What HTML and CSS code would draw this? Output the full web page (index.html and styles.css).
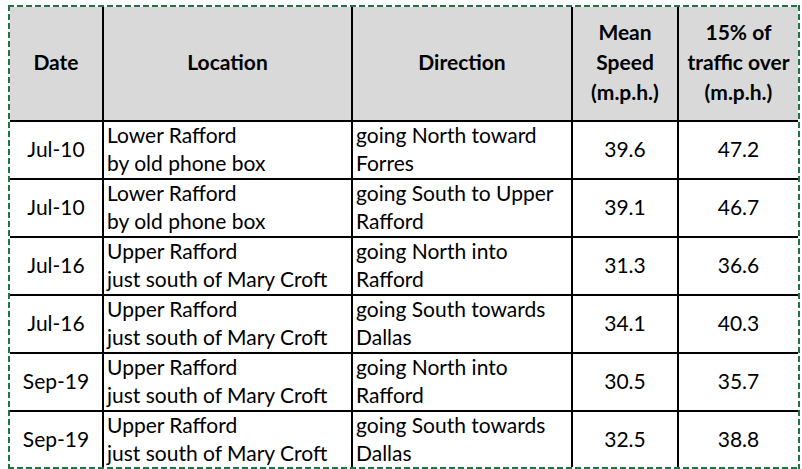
FILE: index.html
```html
<!DOCTYPE html>
<html lang="en">
<head>
<meta charset="utf-8">
<title>Traffic speeds</title>
<link rel="stylesheet" href="styles.css">
</head>
<body>
<div class="sheet">
  <div class="grid">
    <div class="cell head">Date</div>
    <div class="cell head">Location</div>
    <div class="cell head">Direction</div>
    <div class="cell head">Mean<br>Speed<br>(m.p.h.)</div>
    <div class="cell head">15% of<br>traffic over<br>(m.p.h.)</div>

    <div class="cell num">Jul-10</div>
    <div class="cell txt">Lower Rafford<br>by old phone box</div>
    <div class="cell txt">going North toward<br>Forres</div>
    <div class="cell num">39.6</div>
    <div class="cell num">47.2</div>

    <div class="cell num">Jul-10</div>
    <div class="cell txt">Lower Rafford<br>by old phone box</div>
    <div class="cell txt">going South to Upper<br>Rafford</div>
    <div class="cell num">39.1</div>
    <div class="cell num">46.7</div>

    <div class="cell num">Jul-16</div>
    <div class="cell txt">Upper Rafford<br>just south of Mary Croft</div>
    <div class="cell txt">going North into<br>Rafford</div>
    <div class="cell num">31.3</div>
    <div class="cell num">36.6</div>

    <div class="cell num">Jul-16</div>
    <div class="cell txt">Upper Rafford<br>just south of Mary Croft</div>
    <div class="cell txt">going South towards<br>Dallas</div>
    <div class="cell num">34.1</div>
    <div class="cell num">40.3</div>

    <div class="cell num">Sep-19</div>
    <div class="cell txt">Upper Rafford<br>just south of Mary Croft</div>
    <div class="cell txt">going North into<br>Rafford</div>
    <div class="cell num">30.5</div>
    <div class="cell num">35.7</div>

    <div class="cell num">Sep-19</div>
    <div class="cell txt">Upper Rafford<br>just south of Mary Croft</div>
    <div class="cell txt">going South towards<br>Dallas</div>
    <div class="cell num">32.5</div>
    <div class="cell num">38.8</div>
  </div>
</div>
</body>
</html>
```

FILE: styles.css
```css
html, body {
  margin: 0;
  background: #ffffff;
}

body {
  padding: 5px 0 0 8px;
  font-family: Lato, "Open Sans", sans-serif;
  font-size: 21px;
  color: #000000;
}

.sheet {
  box-sizing: border-box;
  width: 792px;
  height: 464px;
  padding: 2px;
  background:
    repeating-linear-gradient(90deg, #217346 0 6px, transparent 6px 9px) left top / 100% 2px no-repeat,
    repeating-linear-gradient(90deg, #217346 0 6px, transparent 6px 9px) left bottom / 100% 2px no-repeat,
    repeating-linear-gradient(180deg, #217346 0 6px, transparent 6px 9px) left top / 2px 100% no-repeat,
    repeating-linear-gradient(180deg, #217346 0 6px, transparent 6px 9px) right top / 2px 100% no-repeat;
}

.grid {
  display: grid;
  grid-template-columns: 92px 247px 218px 104px 119px;
  grid-template-rows: 113px repeat(5, 56px) 55px;
  gap: 2px;
  background: #000000;
  height: 460px;
}

.cell {
  box-sizing: border-box;
  background: #ffffff;
  display: flex;
  align-items: center;
  line-height: 28px;
  white-space: nowrap;
  overflow: hidden;
  padding-bottom: 2px;
}

.head {
  background: #d9d9d9;
  font-weight: 700;
  justify-content: center;
  text-align: center;
  line-height: 30px;
  padding-bottom: 4px;
}

.num {
  justify-content: center;
  text-align: center;
}

.txt {
  justify-content: flex-start;
  padding-left: 3px;
}
```
